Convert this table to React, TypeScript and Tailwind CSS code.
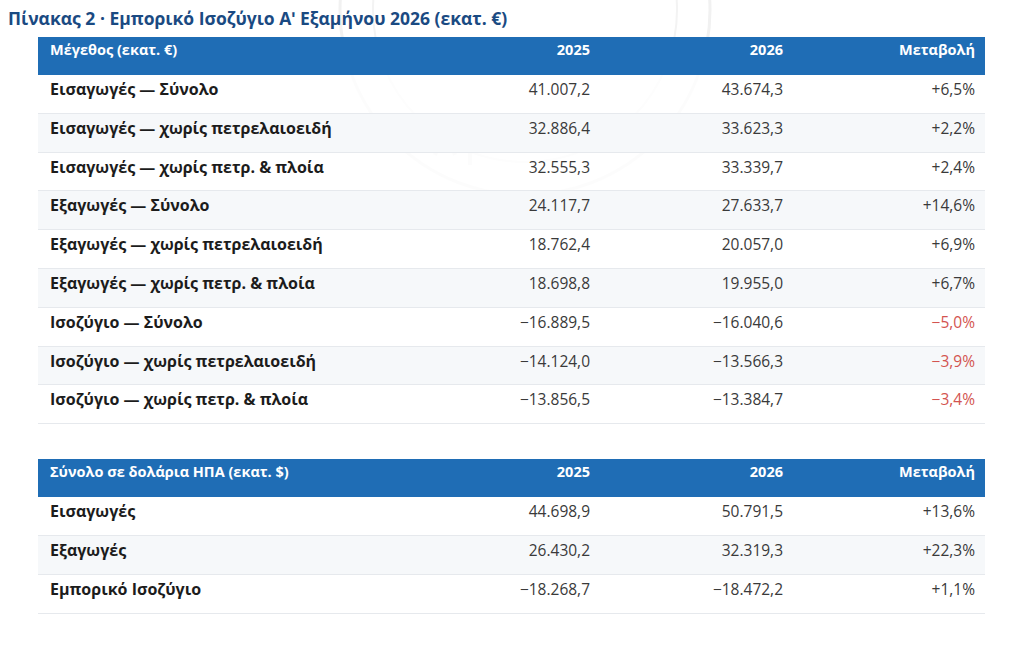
import React from "react";

type Row = {
  label: string;
  y2025: string;
  y2026: string;
  change: string;
  negative?: boolean;
};

const EUR_ROWS: Row[] = [
  { label: "Εισαγωγές — Σύνολο", y2025: "41.007,2", y2026: "43.674,3", change: "+6,5%" },
  { label: "Εισαγωγές — χωρίς πετρελαιοειδή", y2025: "32.886,4", y2026: "33.623,3", change: "+2,2%" },
  { label: "Εισαγωγές — χωρίς πετρ. & πλοία", y2025: "32.555,3", y2026: "33.339,7", change: "+2,4%" },
  { label: "Εξαγωγές — Σύνολο", y2025: "24.117,7", y2026: "27.633,7", change: "+14,6%" },
  { label: "Εξαγωγές — χωρίς πετρελαιοειδή", y2025: "18.762,4", y2026: "20.057,0", change: "+6,9%" },
  { label: "Εξαγωγές — χωρίς πετρ. & πλοία", y2025: "18.698,8", y2026: "19.955,0", change: "+6,7%" },
  { label: "Ισοζύγιο — Σύνολο", y2025: "−16.889,5", y2026: "−16.040,6", change: "−5,0%", negative: true },
  { label: "Ισοζύγιο — χωρίς πετρελαιοειδή", y2025: "−14.124,0", y2026: "−13.566,3", change: "−3,9%", negative: true },
  { label: "Ισοζύγιο — χωρίς πετρ. & πλοία", y2025: "−13.856,5", y2026: "−13.384,7", change: "−3,4%", negative: true },
];

const USD_ROWS: Row[] = [
  { label: "Εισαγωγές", y2025: "44.698,9", y2026: "50.791,5", change: "+13,6%" },
  { label: "Εξαγωγές", y2025: "26.430,2", y2026: "32.319,3", change: "+22,3%" },
  { label: "Εμπορικό Ισοζύγιο", y2025: "−18.268,7", y2026: "−18.472,2", change: "+1,1%" },
];

// faint seal in the background (decorative only)
function Watermark() {
  return (
    <svg
      className="pointer-events-none absolute left-[285px] top-[-175px]"
      width="480"
      height="380"
      viewBox="0 0 480 380"
      fill="none"
      aria-hidden="true"
    >
      <circle cx="240" cy="185" r="185" stroke="#f1f1f1" strokeWidth="3" />
      <circle cx="240" cy="185" r="152" stroke="#f3f3f3" strokeWidth="2" />
      <path d="M150 330 q10 -30 20 0 M185 300 v40 M200 320 q15 -25 25 5" stroke="#f2f2f2" strokeWidth="4" />
    </svg>
  );
}

function Table({ head, rows }: { head: string; rows: Row[] }) {
  return (
    <div className="w-[947px] ml-[38px]">
      <div className="grid grid-cols-[369px_193px_193px_192px] h-[38px] bg-[#1f6db5] text-white text-[14.5px] font-bold leading-[20px]">
        <div className="pl-[12px] pt-[3px] whitespace-nowrap">{head}</div>
        <div className="text-right pr-[10px] pt-[3px]">2025</div>
        <div className="text-right pr-[10px] pt-[3px]">2026</div>
        <div className="text-right pr-[10px] pt-[3px]">Μεταβολή</div>
      </div>
      {rows.map((r, i) => (
        <div
          key={r.label}
          className={`grid grid-cols-[369px_193px_193px_192px] h-[38.8px] border-b border-[#e6e9ed] text-[15.5px] leading-[22px] ${
            i % 2 === 1 ? "bg-[#f6f8fa]" : "bg-white/80"
          }`}
        >
          <div className="pl-[12px] pt-[3px] text-[16px] font-bold text-[#1c1c1c] whitespace-nowrap">{r.label}</div>
          <div className="text-right pr-[10px] pt-[3px] text-[#3a3a3a]">{r.y2025}</div>
          <div className="text-right pr-[10px] pt-[3px] text-[#3a3a3a]">{r.y2026}</div>
          <div className={`text-right pr-[10px] pt-[3px] ${r.negative ? "text-[#d35450]" : "text-[#3a3a3a]"}`}>
            {r.change}
          </div>
        </div>
      ))}
    </div>
  );
}

export default function App() {
  return (
    <div className="relative w-[1024px] h-[653px] overflow-hidden bg-white font-['Open_Sans',sans-serif]">
      <Watermark />
      <div className="relative">
        <h1 className="pl-[8px] pt-[6px] h-[37px] text-[17.5px] font-bold text-[#1a4a82] leading-[24px] whitespace-nowrap">
          Πίνακας 2 · Εμπορικό Ισοζύγιο Αʹ Εξαμήνου 2026 (εκατ. €)
        </h1>
        <Table head="Μέγεθος (εκατ. €)" rows={EUR_ROWS} />
        <div className="h-[35px]" />
        <Table head="Σύνολο σε δολάρια ΗΠΑ (εκατ. $)" rows={USD_ROWS} />
      </div>
    </div>
  );
}
